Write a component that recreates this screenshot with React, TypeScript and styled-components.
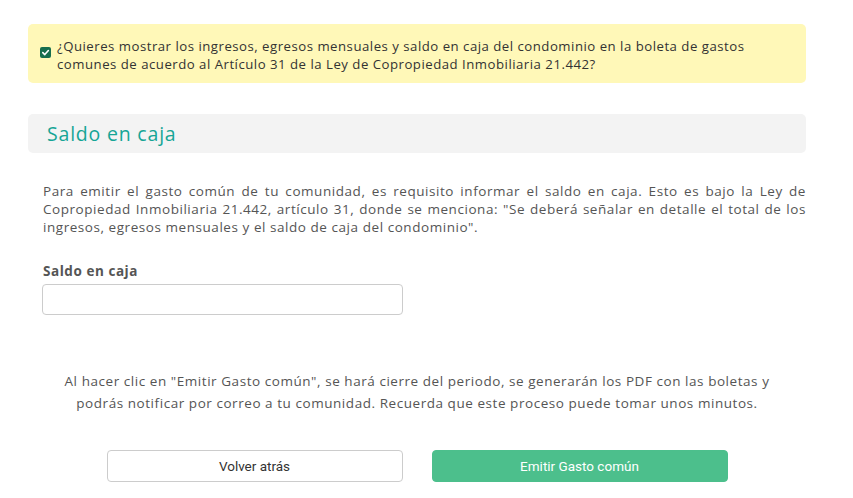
import React from "react";
import styled, { createGlobalStyle } from "styled-components";

const Global = createGlobalStyle`
  html, body { margin: 0; padding: 0; background: #fff; }
  body { font-family: "Open Sans", "DejaVu Sans", sans-serif; color: #555; letter-spacing: 0.55px; }
  * { box-sizing: border-box; }
`;

const Page = styled.div`
  width: 853px;
  padding: 24px 47px 0 28px;
`;

const Notice = styled.label`
  display: flex;
  align-items: flex-start;
  gap: 6px;
  background: #fff8b8;
  border-radius: 5px;
  padding: 13px 12px 12px 12px;
  font-size: 13.2px;
  letter-spacing: 0.5px;
  line-height: 18px;
  color: #333;
  height: 59px;
`;

const Check = styled.span`
  flex: none;
  width: 11px;
  height: 11px;
  margin-top: 10px;
  border-radius: 2px;
  background: #176e4e;
  display: flex;
  align-items: center;
  justify-content: center;
`;

const SectionHeader = styled.div`
  margin-top: 31px;
  height: 39px;
  background: #f3f3f3;
  border-radius: 5px;
  display: flex;
  align-items: center;
  padding-left: 19px;
  font-size: 19.5px;
  letter-spacing: 0.8px;
  color: #16a596;
`;

const Body = styled.div`
  padding: 0 0 0 15px;
`;

const Paragraph = styled.p`
  margin: 29px 0 0 0;
  font-size: 13.5px;
  line-height: 18px;
  text-align: justify;
  color: #555;
`;

const FieldLabel = styled.div`
  margin-top: 26px;
  font-size: 13.5px;
  font-weight: 700;
  color: #555;
`;

const Input = styled.input`
  display: block;
  margin-top: 4px;
  margin-left: -1px;
  width: 361px;
  height: 31px;
  border: 1px solid #ccc;
  border-radius: 4px;
  outline: none;
`;

const Note = styled.p`
  margin: 55px 0 0 0;
  text-align: center;
  font-size: 13.5px;
  line-height: 22px;
  color: #555;
`;

const Actions = styled.div`
  display: flex;
  justify-content: center;
  gap: 29px;
  margin-top: 36px;
`;

const Button = styled.button<{ $primary?: boolean }>`
  width: 296px;
  height: 32px;
  border-radius: 4px;
  font-family: "Roboto", sans-serif;
  font-size: 13.5px;
  letter-spacing: 0;
  cursor: pointer;
  border: 1px solid ${(p) => (p.$primary ? "#4cbf8c" : "#ccc")};
  background: ${(p) => (p.$primary ? "#4cbf8c" : "#fff")};
  color: ${(p) => (p.$primary ? "#fff" : "#333")};
`;

export default function App() {
  return (
    <Page>
      <Global />
      <Notice>
        <Check>
          <svg width="9" height="9" viewBox="0 0 10 10">
            <path d="M2 5.2 L4.2 7.3 L8.2 2.8" stroke="#fff" strokeWidth="1.8" fill="none" strokeLinecap="round" strokeLinejoin="round" />
          </svg>
        </Check>
        <span>
          ¿Quieres mostrar los ingresos, egresos mensuales y saldo en caja del condominio en la boleta de gastos
          <br />
          comunes de acuerdo al Artículo 31 de la Ley de Copropiedad Inmobiliaria 21.442?
        </span>
      </Notice>
      <SectionHeader>Saldo en caja</SectionHeader>
      <Body>
        <Paragraph>
          Para emitir el gasto común de tu comunidad, es requisito informar el saldo en caja. Esto es bajo la Ley de Copropiedad Inmobiliaria 21.442, artículo 31, donde se menciona: "Se deberá señalar en detalle el total de los ingresos, egresos mensuales y el saldo de caja del condominio".
        </Paragraph>
        <FieldLabel>Saldo en caja</FieldLabel>
        <Input type="text" />
      </Body>
      <Note>
        Al hacer clic en "Emitir Gasto común", se hará cierre del periodo, se generarán los PDF con las boletas y
        <br />
        podrás notificar por correo a tu comunidad. Recuerda que este proceso puede tomar unos minutos.
      </Note>
      <Actions>
        <Button>Volver atrás</Button>
        <Button $primary>Emitir Gasto común</Button>
      </Actions>
    </Page>
  );
}
